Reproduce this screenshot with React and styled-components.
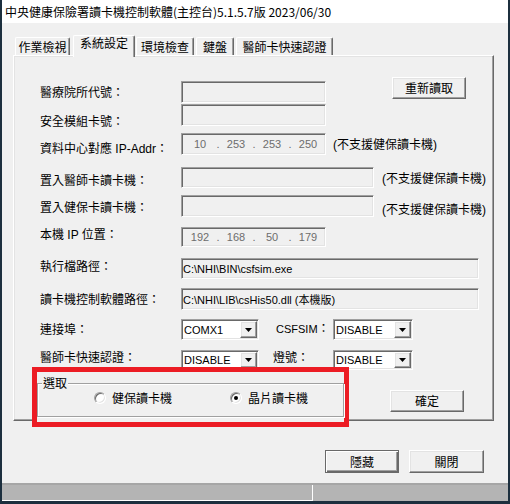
import React from 'react';
import styled, { createGlobalStyle, css } from 'styled-components';

const UI_FONT = '"Liberation Sans", "Noto Sans CJK TC", sans-serif';
const CJK_FONT = '"Noto Sans CJK TC", "Liberation Sans", sans-serif';

const GlobalStyle = createGlobalStyle`
  html, body {
    margin: 0;
    padding: 0;
    background: #f0f0f0;
  }
  * {
    box-sizing: border-box;
  }
`;

const Window = styled.div`
  width: 510px;
  height: 504px;
  display: flex;
  flex-direction: column;
  border: solid #1c2f3e;
  border-width: 0 2px 3px 2px;
  background: #f0f0f0;
  font-family: ${UI_FONT};
  font-size: 12px;
  color: #000;
  overflow: hidden;
`;

const TitleBar = styled.div`
  flex: none;
  height: 23px;
  background: #fff;
  padding-left: 3px;
  line-height: 23px;
  font-family: ${CJK_FONT};
  white-space: nowrap;
`;

const Body = styled.div`
  flex: 1;
  display: flex;
  flex-direction: column;
  padding: 12px 0 0 11px;
`;

const TabRow = styled.div`
  position: relative;
  z-index: 2;
  flex: none;
  height: 20px;
  display: flex;
  align-items: flex-end;
`;

const Tab = styled.div`
  flex: none;
  width: ${p => p.$w}px;
  height: ${p => (p.$active ? 22 : 18)}px;
  margin-left: ${p => p.$ml}px;
  margin-bottom: ${p => (p.$active ? -2 : 0)}px;
  background: #f0f0f0;
  border-top: 1px solid #fff;
  border-left: 1px solid #fff;
  border-right: 1px solid #696969;
  box-shadow: inset -1px 0 0 #a0a0a0;
  border-radius: 2px 2px 0 0;
  text-align: center;
  font-family: ${CJK_FONT};
  line-height: ${p => (p.$active ? 14 : 17)}px;
  white-space: nowrap;
`;

const Panel = styled.div`
  flex: none;
  width: 481px;
  height: 366px;
  border: 1px solid;
  border-color: #fff #696969 #696969 #fff;
  box-shadow: inset -1px -1px 0 #a0a0a0, inset 1px 1px 0 #e3e3e3;
  padding-left: 18px;
`;

const Row = styled.div`
  display: flex;
  align-items: flex-start;
  height: ${p => p.$h}px;
  margin-top: ${p => p.$mt}px;
  padding-left: ${p => p.$pl ?? 8}px;
`;

const Label = styled.div`
  flex: none;
  width: ${p => p.$w ?? 141}px;
  margin-left: ${p => p.$ml ?? 0}px;
  padding-top: ${p => p.$pt ?? 0}px;
  font-size: ${p => p.$size ?? 12}px;
  line-height: 16px;
  white-space: nowrap;
`;

const Colon = styled.span`
  font-size: 12px;
`;

const Note = styled.div`
  flex: none;
  margin-left: ${p => p.$ml}px;
  padding-top: ${p => p.$pt}px;
  line-height: 16px;
  white-space: nowrap;
`;

const sunken = css`
  border: 1px solid;
  border-color: #a0a0a0 #fff #fff #a0a0a0;
  box-shadow: inset 1px 1px 0 #696969, inset -1px -1px 0 #e3e3e3;
`;

const raised = css`
  border: 1px solid;
  border-color: #fff #696969 #696969 #fff;
  box-shadow: inset -1px -1px 0 #a0a0a0, inset 1px 1px 0 #e3e3e3;
`;

const Field = styled.div`
  flex: none;
  width: ${p => p.$w}px;
  height: ${p => p.$h}px;
  margin-top: ${p => p.$mt ?? 0}px;
  background: #f0f0f0;
  ${sunken}
  display: flex;
  align-items: center;
  padding-left: 1px;
  font-size: 11px;
  white-space: nowrap;
  overflow: hidden;
`;

const IpWrap = styled.div`
  display: flex;
  padding-left: 5px;
  color: #6d6d6d;
`;

const Octet = styled.span`
  width: 24px;
  text-align: center;
`;

const Dot = styled.span`
  width: 12px;
  text-align: center;
`;

const Button = styled.button`
  flex: none;
  width: ${p => p.$w}px;
  height: ${p => p.$h}px;
  margin-left: ${p => p.$ml ?? 0}px;
  margin-top: ${p => p.$mt ?? 0}px;
  padding: 0;
  background: #f0f0f0;
  font-family: ${CJK_FONT};
  font-size: 12px;
  line-height: 1;
  color: #000;
  ${raised}
  ${p =>
    p.$default &&
    css`
      border-color: #696969;
      box-shadow: inset 1px 1px 0 #fff, inset -1px -1px 0 #696969, inset -2px -2px 0 #a0a0a0;
    `}
`;

const Select = styled.div`
  flex: none;
  width: ${p => p.$w}px;
  height: ${p => p.$h}px;
  margin-left: ${p => p.$ml ?? 0}px;
  background: #fff;
  ${sunken}
  display: flex;
  padding: 1px;
`;

const SelectText = styled.span`
  flex: 1;
  display: flex;
  align-items: center;
  padding-left: 1px;
  font-size: 11px;
`;

const DropButton = styled.span`
  flex: none;
  width: 17px;
  background: #f0f0f0;
  ${raised}
  display: flex;
  align-items: center;
  justify-content: center;
`;

const Highlight = styled.div`
  position: relative;
  z-index: 1;
  flex: none;
  width: 317px;
  height: 60px;
  border: 5px solid #ec1c24;
  background: #f0f0f0;
  padding-top: 3px;
`;

const Group = styled.fieldset`
  margin: 0;
  min-width: 0;
  height: 42px;
  padding: 0 0 0 4px;
  border: 1px solid #a0a0a0;
  box-shadow: inset 1px 1px 0 #fff, 1px 1px 0 #fff;
`;

const Legend = styled.legend`
  padding: 0 1px;
  background: #f0f0f0;
  font-family: ${CJK_FONT};
  line-height: 16px;
`;

const RadioRow = styled.div`
  display: flex;
  align-items: center;
  height: 14px;
`;

const RadioOption = styled.label`
  display: flex;
  align-items: center;
  gap: 6px;
  margin-left: ${p => p.$ml}px;
  font-family: ${CJK_FONT};
  line-height: 14px;
`;

const RadioCircle = styled.span`
  flex: none;
  width: 12px;
  height: 12px;
  border-radius: 50%;
  background: #fff;
  border: 1px solid;
  border-color: #a0a0a0 #fff #fff #a0a0a0;
  box-shadow: inset 1px 1px 0 #696969, inset -1px -1px 0 #e3e3e3;
  display: flex;
  align-items: center;
  justify-content: center;

  &::after {
    content: '';
    width: 4px;
    height: 4px;
    border-radius: 50%;
    background: ${p => (p.$checked ? '#000' : 'transparent')};
  }
`;

const ButtonsRow = styled.div`
  flex: none;
  display: flex;
  justify-content: flex-end;
  gap: 10px;
  margin-top: 29px;
  padding-right: 24px;
`;

const StatusBar = styled.div`
  flex: none;
  height: 18px;
  background: #b4b4b4;
  border-top: 2px solid #a6a6a6;
  display: flex;
`;

const StatusPane = styled.div`
  width: 311px;
  border-right: 1px solid #fff;
  border-bottom: 1px solid #fff;
`;

const tabs = [
  { text: '作業檢視', w: 55, ml: 2 },
  { text: '系統設定', w: 62, ml: 3, active: true },
  { text: '環境檢查', w: 58, ml: 1 },
  { text: '鍵盤', w: 38, ml: 2 },
  { text: '醫師卡快速認證', w: 97, ml: 2 },
];

const IpValue = ({ parts }) => (
  <IpWrap>
    {parts.map((p, i) => (
      <React.Fragment key={i}>
        {i > 0 && <Dot>.</Dot>}
        <Octet>{p}</Octet>
      </React.Fragment>
    ))}
  </IpWrap>
);

const Combo = ({ value, w, h, ml }) => (
  <Select $w={w} $h={h} $ml={ml}>
    <SelectText>{value}</SelectText>
    <DropButton>
      <svg width="7" height="4" viewBox="0 0 7 4">
        <path d="M0 0h7L3.5 4z" fill="#000" />
      </svg>
    </DropButton>
  </Select>
);

const NOTE = '(不支援健保讀卡機)';

export default function App() {
  return (
    <>
      <GlobalStyle />
      <Window>
        <TitleBar>中央健康保險署讀卡機控制軟體(主控台)5.1.5.7版 2023/06/30</TitleBar>
        <Body>
          <TabRow>
            {tabs.map(t => (
              <Tab key={t.text} $w={t.w} $ml={t.ml} $active={t.active}>
                {t.text}
              </Tab>
            ))}
          </TabRow>
          <Panel>
            <Row $h={26} $mt={21}>
              <Label $pt={8}>醫療院所代號：</Label>
              <Field $w={145} $h={22} $mt={4} />
              <Button $w={74} $h={22} $ml={66}>重新讀取</Button>
            </Row>
            <Row $h={22} $mt={1}>
              <Label $pt={10}>安全模組卡號：</Label>
              <Field $w={145} $h={22} />
            </Row>
            <Row $h={22} $mt={7}>
              <Label $pt={8}>資料中心對應 IP-Addr：</Label>
              <Field $w={145} $h={22}>
                <IpValue parts={['10', '253', '253', '250']} />
              </Field>
              <Note $ml={7} $pt={4}>{NOTE}</Note>
            </Row>
            <Row $h={21} $mt={12}>
              <Label $pt={6}>置入醫師卡讀卡機：</Label>
              <Field $w={193} $h={21} />
              <Note $ml={8} $pt={4}>{NOTE}</Note>
            </Row>
            <Row $h={22} $mt={7}>
              <Label $pt={5}>置入健保卡讀卡機：</Label>
              <Field $w={193} $h={22} />
              <Note $ml={8} $pt={7}>{NOTE}</Note>
            </Row>
            <Row $h={20} $mt={10}>
              <Label $pt={0}>本機 IP 位置：</Label>
              <Field $w={145} $h={20}>
                <IpValue parts={['192', '168', '50', '179']} />
              </Field>
            </Row>
            <Row $h={21} $mt={11}>
              <Label $pt={1}>執行檔路徑：</Label>
              <Field $w={298} $h={21}>C:\NHI\BIN\csfsim.exe</Field>
            </Row>
            <Row $h={22} $mt={9}>
              <Label $pt={4}>讀卡機控制軟體路徑：</Label>
              <Field $w={298} $h={22}>C:\NHI\LIB\csHis50.dll (本機版)</Field>
            </Row>
            <Row $h={21} $mt={9}>
              <Label $pt={3}>連接埠：</Label>
              <Combo value="COMX1" w={78} h={21} />
              <Label $w={57} $ml={17} $pt={2} $size={11}>
                CSFSIM<Colon>：</Colon>
              </Label>
              <Combo value="DISABLE" w={80} h={21} />
            </Row>
            <Row $h={20} $mt={10}>
              <Label $pt={0}>醫師卡快速認證：</Label>
              <Combo value="DISABLE" w={78} h={20} />
              <Label $w={60} $ml={14} $pt={0}>燈號：</Label>
              <Combo value="DISABLE" w={80} h={20} />
            </Row>
            <Row $h={60} $mt={-3} $pl={0}>
              <Highlight>
                <Group>
                  <Legend>選取</Legend>
                  <RadioRow>
                    <RadioOption $ml={52}>
                      <RadioCircle />
                      健保讀卡機
                    </RadioOption>
                    <RadioOption $ml={58}>
                      <RadioCircle $checked />
                      晶片讀卡機
                    </RadioOption>
                  </RadioRow>
                </Group>
              </Highlight>
              <Button $w={74} $h={22} $ml={41} $mt={23}>確定</Button>
            </Row>
          </Panel>
          <ButtonsRow>
            <Button $w={74} $h={23} $default>隱藏</Button>
            <Button $w={75} $h={23}>關閉</Button>
          </ButtonsRow>
        </Body>
        <StatusBar>
          <StatusPane />
        </StatusBar>
      </Window>
    </>
  );
}
